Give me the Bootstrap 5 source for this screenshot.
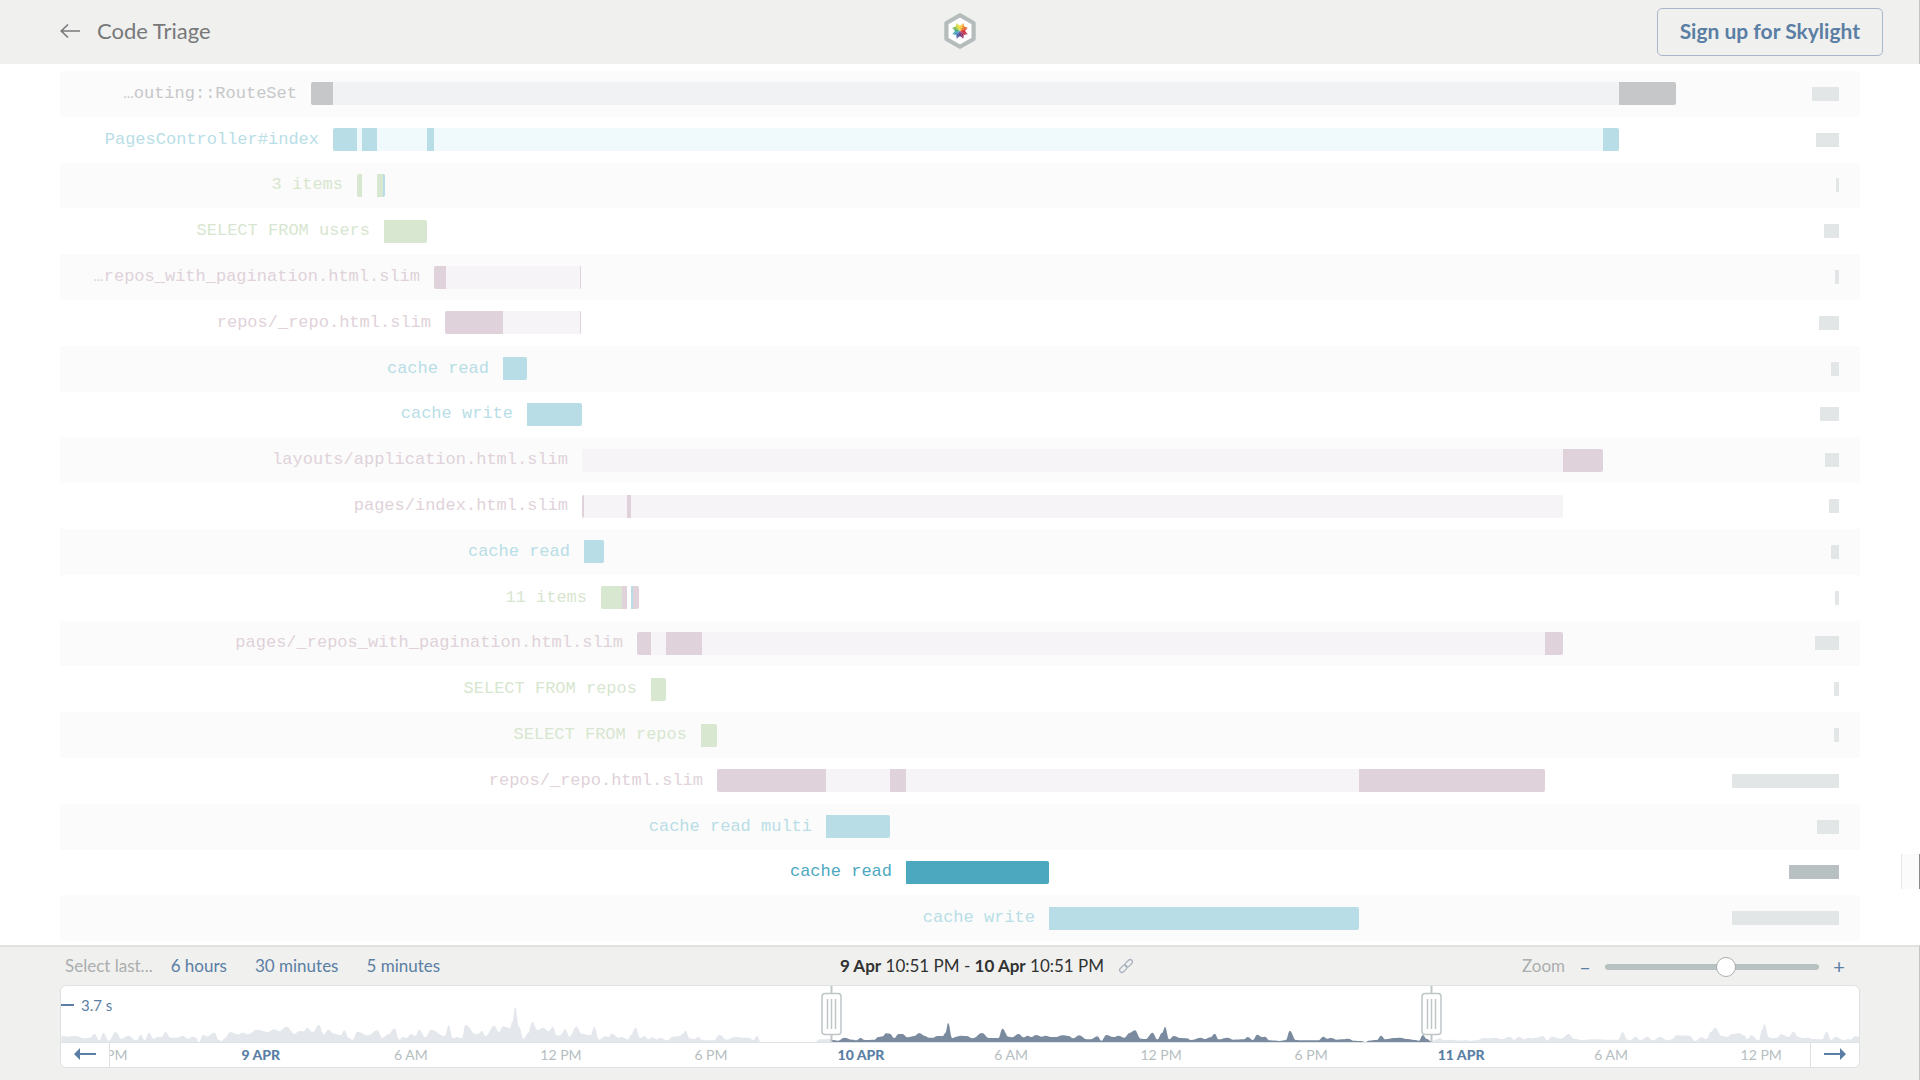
<!DOCTYPE html>
<html lang="en">
<head>
<meta charset="utf-8">
<meta name="viewport" content="width=device-width, initial-scale=1">
<title>Code Triage</title>
<link rel="stylesheet" href="https://cdn.jsdelivr.net/npm/bootstrap@5.3.0/dist/css/bootstrap.min.css">
<style>
  :root { --accent: #5a7ea4; --soft: #b5bec0; --panel: #f0f0ee; }
  body { font-family: Lato, "Open Sans", sans-serif; color: #303232; overflow: hidden; }
  a { color: var(--accent); }
  .topbar { background: var(--panel); height: 64px; border-right: 1px solid #c4c4c4; }
  .topbar-side { flex: 1 1 0; }
  .app-name { font-size: 22px; line-height: 30px; color: #77787a; gap: 17px; margin: 0 0 3px 60px; }
  .brand-mark { margin-bottom: 2px; }
  .btn-signup { --bs-btn-color: var(--accent); --bs-btn-border-color: #a8b6cb; --bs-btn-hover-bg: var(--accent); --bs-btn-hover-color: #fff;
    font-size: 21px; font-weight: 700; line-height: 30px; padding: 7px 22px 9px; border-radius: 5px; margin-right: 36px; }

  .trace { padding: 7px 60px 4px; }
  .trace-row { flex: 1 1 0; min-height: 0; }
  .trace-row:nth-child(odd) { background: #fbfbfb; }
  .trace-label { font: 17px/24px "Liberation Mono", monospace; padding-right: 14px; flex: none; }
  .seg { height: 23px; flex: none; }
  .seg-first { border-radius: 2px 0 0 2px; }
  .seg-last { border-radius: 0 2px 2px 0; }
  .t-gray { color: #c6c7c9; } .t-blue { color: #b8dee6; } .t-green { color: #d7e6cf; } .t-mauve { color: #dfd2da; } .t-on { color: #4ca8bf; }
  .s-gray { background: #c6c7c9; } .s-blue { background: #b8dde6; } .s-green { background: #d8e7d0; } .s-mauve { background: #dfd2da; } .s-on { background: #4ca8bf; }
  .s-grayl { background: #f1f2f3; } .s-bluel { background: #f0f9fb; } .s-mauvel { background: #f6f4f7; }
  .alloc { height: 14px; background: #e2e6e6; margin-left: auto; margin-right: 21px; flex: none; }
  .alloc-on { background: #b8c0c2; }
  .drawer-tab { right: 0; bottom: 56px; width: 19px; height: 35px; background: #fbfbfb; border-left: 1px solid #e6e6e6; border-right: 1px solid #8a8a8a; }

  .timebar { background: var(--panel); border-top: 2px solid #e2e3e1; border-right: 1px solid #c4c4c4; padding: 0 59px 12px 60px; }
  .controls { height: 38px; font-size: 17px; line-height: 24px; }
  .controls-side { flex: 1 1 0; }
  .muted { color: #abaeae; }
  .quick { gap: 28px; padding-left: 5px; }
  .quick-label { margin-right: -10px; }
  .range-label { padding-left: 64px; gap: 14px; }
  .zoomer { gap: 14px; padding-right: 15px; }
  .zoomer .btn { --bs-btn-color: var(--accent); font-size: 20px; line-height: 24px; width: 12px; }
  .zoom-slider { width: 214px; height: 20px; appearance: none; background: transparent; margin: 2px 0 0; }
  .zoom-slider::-webkit-slider-runnable-track { height: 6px; border-radius: 3px; background: #b8c1c1; }
  .zoom-slider::-webkit-slider-thumb { appearance: none; width: 20px; height: 20px; margin-top: -7px; border-radius: 50%; background: #fff; border: 1px solid #a9aeae; }

  .chart-box { background: #fff; border: 1px solid #dfe2e2; border-radius: 6px; }
  .chart-area { height: 57px; border-bottom: 1px solid #e0e3e6; }
  .chart-area > svg { display: block; width: 100%; height: 56px; }
  .scale-mark { left: 0; top: 8px; font-size: 15px; line-height: 22px; color: var(--accent); gap: 7px; }
  .scale-dash { width: 13px; height: 2px; background: var(--accent); }
  .brush { top: 0; width: 21px; height: 56px; }
  .axis { height: 24px; }
  .axis-strip { width: 100%; height: 24px; margin-left: -1.4%; }
  .tick { flex: 0 0 8.345%; font-size: 14px; line-height: 24px; color: var(--soft); }
  .tick-day { color: var(--accent); font-weight: 900; }
  .pager { top: 0; width: 49px; height: 24px; background: #fff; border: 0; padding: 0; }
  .pager-prev { left: 0; border-right: 1px solid #dfe2e2; border-bottom-left-radius: 6px; }
  .pager-next { right: 0; border-left: 1px solid #dfe2e2; border-bottom-right-radius: 6px; }
  .pager svg { margin-top: -2px; }
</style>
</head>
<body class="vh-100 d-flex flex-column bg-white">

<header class="topbar d-flex align-items-center flex-shrink-0">
  <div class="topbar-side">
    <a href="#" class="app-name d-inline-flex align-items-center text-decoration-none">
      <svg width="20" height="16" viewBox="0 0 20 16" fill="none" stroke="#77787a" stroke-width="1.6" aria-hidden="true"><path d="M20 8H1.500M8 1.500 1.200 8 8 14.500"/></svg>
      <span>Code Triage</span>
    </a>
  </div>
  <a href="#" class="brand-mark" aria-label="Skylight">
    <svg class="d-block" width="34" height="38" viewBox="-17 -19 34 38">
      <path d="M0-15.8 13.6-8V8L0 15.8-13.6 8V-8Z" fill="#fff" stroke="#b4bdbc" stroke-width="4.200" stroke-linejoin="round"/>
      <g transform="scale(1.1)">
        <path d="M0 0 3-7.2 4.2-3Z" fill="#f2a33a"/><path d="M0 0 3-7.2 0-4.6Z" fill="#f6c944"/>
        <path d="M0 0-3-7.2 0-4.6Z" fill="#f5dc3d"/><path d="M0 0-3-7.2-4-4Z" fill="#d3d94a"/>
        <path d="M0 0-7-3-4-4Z" fill="#8cc152"/><path d="M0 0-7-3-4.6 0Z" fill="#5cae6c"/>
        <path d="M0 0-7 3-4.6 0Z" fill="#4db2b7"/><path d="M0 0-7 3-3.4 3.4Z" fill="#3f8fbd"/>
        <path d="M0 0-3 7-3.4 3.4Z" fill="#3f6cae"/><path d="M0 0-3 7 0 4.6Z" fill="#5a4d96"/>
        <path d="M0 0 3 7 0 4.6Z" fill="#74397f"/><path d="M0 0 3 7 3.4 3.4Z" fill="#93305f"/>
        <path d="M0 0 7 3 3.4 3.4Z" fill="#b72c4c"/><path d="M0 0 7 3 4.6 0Z" fill="#cf3340"/>
        <path d="M0 0 7-3 4.6 0Z" fill="#dd4a3a"/><path d="M0 0 7-3 4-4Z" fill="#ea7238"/>
      </g>
    </svg>
  </a>
  <div class="topbar-side text-end">
    <button type="button" class="btn btn-signup">Sign up for Skylight</button>
  </div>
</header>

<main class="trace position-relative flex-fill d-flex flex-column overflow-hidden">
  <div id="rows" class="flex-fill d-flex flex-column"></div>
  <div class="drawer-tab position-absolute"></div>
</main>

<footer class="timebar flex-shrink-0">
  <div class="controls d-flex align-items-center">
    <nav class="controls-side quick d-flex" aria-label="Time range">
      <span class="quick-label muted">Select last...</span>
      <a href="#" class="text-decoration-none">6 hours</a>
      <a href="#" class="text-decoration-none">30 minutes</a>
      <a href="#" class="text-decoration-none">5 minutes</a>
    </nav>
    <div class="range-label d-flex align-items-center">
      <span><b>9 Apr</b> 10:51 PM - <b>10 Apr</b> 10:51 PM</span>
      <a href="#" aria-label="Permalink"><svg class="d-block" width="16" height="16" viewBox="0 0 16 16" fill="none" stroke="#a3afbc" stroke-width="1.1"><rect x="-4.3" y="-2.3" width="8.6" height="4.6" rx="2.3" transform="translate(10.7 5.3) rotate(-45)"/><rect x="-4.3" y="-2.3" width="8.6" height="4.6" rx="2.3" transform="translate(5.3 10.7) rotate(-45)"/></svg></a>
    </div>
    <div class="controls-side zoomer d-flex align-items-center justify-content-end">
      <label for="zoom" class="muted">Zoom</label>
      <button type="button" class="btn p-0 border-0" aria-label="Zoom out">–</button>
      <input type="range" id="zoom" class="zoom-slider" min="0" max="100" value="57">
      <button type="button" class="btn p-0 border-0" aria-label="Zoom in">+</button>
    </div>
  </div>

  <div class="chart-box">
    <div class="chart-area position-relative">
      <svg viewBox="0 0 4410 168" preserveAspectRatio="none" aria-hidden="true">
        <path id="before" fill="#e4e8ed"/>
        <path id="after" fill="#e4e8ed"/>
        <path id="selected" fill="#7b8b9f"/>
      </svg>
      <div class="scale-mark position-absolute d-flex align-items-center"><span class="scale-dash"></span>3.7 s</div>
      <div id="brushes"></div>
    </div>
    <div class="axis position-relative overflow-hidden">
      <div id="ticks" class="axis-strip d-flex text-center"></div>
      <button type="button" class="pager pager-prev position-absolute" aria-label="Earlier"><svg class="d-block mx-auto" width="22" height="20" viewBox="0 0 22 20"><path d="M0 10 6 4V9H22v2H6v5Z" fill="#5a7ea4"/></svg></button>
      <button type="button" class="pager pager-next position-absolute" aria-label="Later"><svg class="d-block mx-auto" width="22" height="20" viewBox="0 0 22 20"><path d="M22 10 16 4V9H0v2H16v5Z" fill="#5a7ea4"/></svg></button>
    </div>
  </div>
</footer>

<script src="https://cdn.jsdelivr.net/npm/bootstrap@5.3.0/dist/js/bootstrap.bundle.min.js"></script>
<script>
// Every trace row: label, colour, start, [segment kind, end]..., allocation size. Units: 1800 per row.
const SPAN = 1800, pct = v => (v / SPAN * 100).toFixed(3) + '%';
const rows = [
  ['…outing::RouteSet', 'gray', 251, [['gray', 273], ['grayl', 1559], ['gray', 1616]], 27],
  ['PagesController#index', 'blue', 273, [['blue', 297], ['bluel', 302], ['blue', 317], ['bluel', 367], ['blue', 374], ['bluel', 1543], ['blue', 1559]], 23],
  ['3 items', 'green', 297, [['green', 302], ['none', 317], ['green', 323], ['blue', 325]], 3],
  ['SELECT FROM users', 'green', 324, [['green', 367]], 15],
  ['…repos_with_pagination.html.slim', 'mauve', 374, [['mauve', 386], ['mauvel', 520], ['mauve', 521]], 4],
  ['repos/_repo.html.slim', 'mauve', 385, [['mauve', 443], ['mauvel', 520], ['mauve', 521]], 20],
  ['cache read', 'blue', 443, [['blue', 467]], 8],
  ['cache write', 'blue', 467, [['blue', 522]], 19],
  ['layouts/application.html.slim', 'mauve', 522, [['mauvel', 1503], ['mauve', 1543]], 14],
  ['pages/index.html.slim', 'mauve', 522, [['mauve', 524], ['mauvel', 567], ['mauve', 571], ['mauvel', 1503]], 10],
  ['cache read', 'blue', 524, [['blue', 544]], 8],
  ['11 items', 'green', 541, [['green', 562], ['mauve', 567], ['none', 571], ['blue', 573], ['mauve', 579]], 4],
  ['pages/_repos_with_pagination.html.slim', 'mauve', 577, [['mauve', 591], ['mauvel', 606], ['mauve', 642], ['mauvel', 1485], ['mauve', 1503]], 24],
  ['SELECT FROM repos', 'green', 591, [['green', 606]], 5],
  ['SELECT FROM repos', 'green', 641, [['green', 657]], 5],
  ['repos/_repo.html.slim', 'mauve', 657, [['mauve', 766], ['mauvel', 830], ['mauve', 846], ['mauvel', 1299], ['mauve', 1485]], 107],
  ['cache read multi', 'blue', 766, [['blue', 830]], 22],
  ['cache read', 'on', 846, [['on', 989]], 50],
  ['cache write', 'blue', 989, [['blue', 1299]], 107]
];
document.getElementById('rows').innerHTML = rows.map(([label, color, start, segs, alloc]) => {
  let x = start;
  const bars = segs.map(([kind, end], i) => {
    const w = end - x; x = end;
    const round = (i === 0 ? ' seg-first' : '') + (i === segs.length - 1 ? ' seg-last' : '');
    return `<div class="seg s-${kind}${round}" style="width:${pct(w)}"></div>`;
  }).join('');
  return `<div class="trace-row d-flex align-items-center">
    <div class="trace-label t-${color} text-end text-nowrap" style="width:${pct(start)}">${label}</div>${bars}
    <div class="alloc${color === 'on' ? ' alloc-on' : ''}" style="width:${pct(alloc)}"></div></div>`;
}).join('');

// Response time samples as x,y pairs on the 4410 x 168 chart; y grows downwards, 336 is the axis.
const s1 = [148,317,165,320,182,318,205,325,218,323,229,311,241,331,251,309,264,332,281,306,295,326,312,317,332,331,343,314,352,330,363,308,374,326,384,321,392,322,404,306,415,323,432,323,446,317,458,326,470,320,478,323,485,336,496,314,504,319,524,308,534,330,541,333,548,325,562,306,580,313,594,308,606,313,628,299,656,306,668,298,682,303,700,290,720,311,732,303,742,304,751,293,764,306,780,285,791,313,803,299,817,311,833,315,842,301,853,324,862,329,874,305,900,316,923,301,935,324,950,313,965,295,977,329,986,320,994,324,1006,312,1016,318,1026,299,1040,322,1055,299,1088,318,1098,286,1108,325,1118,321,1130,325,1139,284,1165,313,1172,311,1179,302,1188,318,1210,287,1221,306,1231,289,1248,294,1254,275,1261,231,1270,290,1282,326,1292,310,1303,276,1316,300,1330,293,1343,304,1353,291,1364,317,1371,316,1384,298,1394,320,1411,290,1424,311,1446,315,1455,291,1467,329,1482,319,1490,321,1498,311,1516,323,1522,321,1537,328,1545,315,1556,293];
const s2 = [0,324,10,318,20,328,30,322,40,328,50,323,65,331,80,320,95,319,103,312,111,302,121,325,132,328,142,320,150,329,165,331,180,331,194,314,212,329,232,321,250,323,265,323,278,330,286,317,295,336,430,336,438,328,470,327];
const s3 = [470,330,485,332,500,323,520,329,530,331,540,324,550,330,575,329,582,322,595,319,602,310,612,311,623,324,633,312,643,312,655,322,672,318,684,309,698,318,708,323,718,323,728,318,742,318,748,309,755,279,765,324,775,320,785,317,800,318,815,325,838,309,855,324,878,324,888,296,903,320,912,322,928,312,940,322,950,317,960,321,970,315,985,320,993,317,1010,321,1020,321,1035,316,1050,318,1062,325,1076,316,1095,328,1105,328,1121,319,1131,332,1143,315,1160,321,1173,317,1187,323,1200,309,1213,301,1227,326,1240,327,1256,308,1268,328,1280,308,1287,291,1297,328,1308,318,1325,324,1340,325,1350,330,1375,323,1385,327,1398,322,1409,311,1418,328,1440,323,1455,329,1480,328,1490,321,1502,330,1513,314,1525,321,1532,320,1543,331,1568,333];
const s4 = [15,330,25,302,40,330,55,331,95,331,107,320,117,326,127,324,140,329,155,328,168,326,182,332,200,333,210,336,218,332,238,330,249,317,259,328,280,324,295,323,315,327,330,330,342,332,351,315,361,327,372,334];
const s5 = [372,334,393,325,405,331,420,329,440,332,455,331,470,333,483,331,500,324,515,325,530,323,545,327,564,320,575,329,587,320,600,328,610,323,620,325,631,323,645,318,657,331,667,320,690,326,709,312,722,326,745,330,770,328,800,329,830,329,841,306,853,329,860,331,873,320,885,331,902,320,915,331,934,320,950,331,962,328,973,316,1005,317,1020,333,1034,322,1046,327,1058,305,1068,293,1085,318,1098,321,1108,313,1127,309,1138,316,1148,327,1157,316,1175,331,1183,300,1189,282,1200,322,1208,325,1220,323,1230,313,1248,321,1260,305,1272,320,1285,324,1297,323,1310,327,1330,328,1342,305,1353,330,1363,320,1385,331,1393,327,1400,329,1411,319,1421,320];
const pts = (a, dx) => { const p = []; for (let i = 0; i < a.length; i += 2) p.push([a[i] + dx, a[i + 1] - 168]); return p; };
const area = p => {
  let d = `M${p[0][0]} 168V${p[0][1]}`;
  for (let i = 1; i < p.length; i++) {
    const [x0, y0] = p[i - 1], [x1, y1] = p[i], c = (x1 - x0) * 0.4;
    d += `C${x0 + c} ${y0} ${x1 - c} ${y1} ${x1} ${y1}`;
  }
  return d + 'V168Z';
};
document.getElementById('before').setAttribute('d', area([...pts(s1, -147), ...pts(s2, 1421)]));
document.getElementById('selected').setAttribute('d', area([...pts(s3, 1421), ...pts(s4, 2989)]));
document.getElementById('after').setAttribute('d', area(pts(s5, 2989)));

document.getElementById('brushes').innerHTML = [761, 1362].map(x =>
  `<svg class="brush position-absolute" style="left:${pct(x)}" viewBox="0 0 21 56" fill="none" stroke="#bec6c8" aria-hidden="true">
    <path d="M10.5 0V56" stroke-width="2"/><rect x="1" y="7.5" width="19" height="41" rx="3" fill="#fff" stroke-width="1.5"/>
    <path d="M6.5 13V43M10.5 13V43M14.5 13V43" stroke-width="1.5"/></svg>`).join('');

document.getElementById('ticks').innerHTML =
  ['6 PM', '9 APR', '6 AM', '12 PM', '6 PM', '10 APR', '6 AM', '12 PM', '6 PM', '11 APR', '6 AM', '12 PM']
    .map(t => `<div class="tick${t.includes('APR') ? ' tick-day' : ''}">${t}</div>`).join('');
</script>
</body>
</html>
